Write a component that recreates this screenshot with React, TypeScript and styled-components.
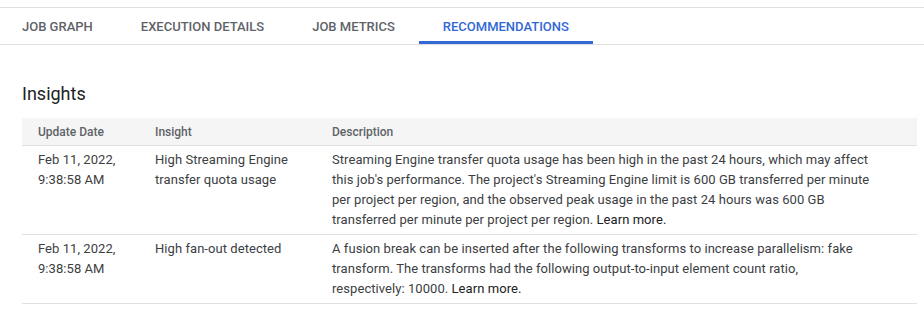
import { Fragment } from 'react';
import styled, { createGlobalStyle } from 'styled-components';

const GlobalStyle = createGlobalStyle`
    html, body {
        margin: 0;
        padding: 0;
        background: #fff;
    }
    body {
        font-family: Roboto, "Liberation Sans", Arial, sans-serif;
        -webkit-font-smoothing: antialiased;
    }
`;

const Page = styled.div`
    padding-top: 7px;
    width: 924px;
`;

const TabBar = styled.nav`
    display: flex;
    height: 36px;
    border-top: 1px solid #e0e0e0;
    border-bottom: 1px solid #e0e0e0;
`;

const Tab = styled.div<{ $active?: boolean }>`
    display: flex;
    align-items: center;
    justify-content: center;
    padding: 0 24px;
    font-size: 13px;
    font-weight: 500;
    text-transform: uppercase;
    color: ${props => (props.$active ? '#3367d6' : '#5f6368')};
    box-shadow: ${props => (props.$active ? 'inset 0 -3px 0 #3367d6' : 'none')};
    cursor: pointer;
    &:first-child {
        padding-left: 22px;
    }
`;

const Section = styled.section`
    padding: 37px 7px 0 22px;
`;

const Heading = styled.h2`
    margin: 0 0 12px;
    font-size: 18px;
    line-height: 24px;
    font-weight: 400;
    color: #202124;
`;

const Table = styled.div`
    display: grid;
    grid-template-columns: 117px 177px 1fr;
`;

const HeadCell = styled.div`
    background: #f5f5f5;
    height: 27px;
    display: flex;
    align-items: center;
    padding-left: 16px;
    font-size: 12px;
    font-weight: 500;
    color: #5f6368;
    border-bottom: 1px solid #e0e0e0;
`;

const Cell = styled.div`
    padding: 4px 16px 4px 16px;
    font-size: 13px;
    line-height: 20px;
    letter-spacing: 0.06px;
    color: #3c4043;
    border-bottom: 1px solid #e0e0e0;
`;

const DescCell = styled(Cell)`
    padding-right: 29px;
`;

const Link = styled.a`
    color: #202124;
    text-decoration: none;
    cursor: pointer;
`;

const tabs = ['Job graph', 'Execution details', 'Job metrics', 'Recommendations'];

const insights = [
    {
        date: 'Feb 11, 2022,',
        time: '9:38:58 AM',
        insight: 'High Streaming Engine transfer quota usage',
        description:
            "Streaming Engine transfer quota usage has been high in the past 24 hours, which may affect this job's performance. The project's Streaming Engine limit is 600 GB transferred per minute per project per region, and the observed peak usage in the past 24 hours was 600 GB transferred per minute per project per region.",
    },
    {
        date: 'Feb 11, 2022,',
        time: '9:38:58 AM',
        insight: 'High fan-out detected',
        description:
            'A fusion break can be inserted after the following transforms to increase parallelism: fake transform. The transforms had the following output-to-input element count ratio, respectively:\u00a010000.',
    },
];

const App = () => {
    return (
        <Page>
            <GlobalStyle />
            <TabBar>
                {tabs.map(t => (
                    <Tab key={t} $active={t === 'Recommendations'}>
                        {t}
                    </Tab>
                ))}
            </TabBar>
            <Section>
                <Heading>Insights</Heading>
                <Table>
                    <HeadCell>Update Date</HeadCell>
                    <HeadCell>Insight</HeadCell>
                    <HeadCell>Description</HeadCell>
                    {insights.map((row, i) => (
                        <Fragment key={i}>
                            <Cell>
                                {row.date}
                                <br />
                                {row.time}
                            </Cell>
                            <Cell>{row.insight}</Cell>
                            <DescCell>
                                {row.description}&nbsp;<Link>Learn more.</Link>
                            </DescCell>
                        </Fragment>
                    ))}
                </Table>
            </Section>
        </Page>
    );
};

export default App;
